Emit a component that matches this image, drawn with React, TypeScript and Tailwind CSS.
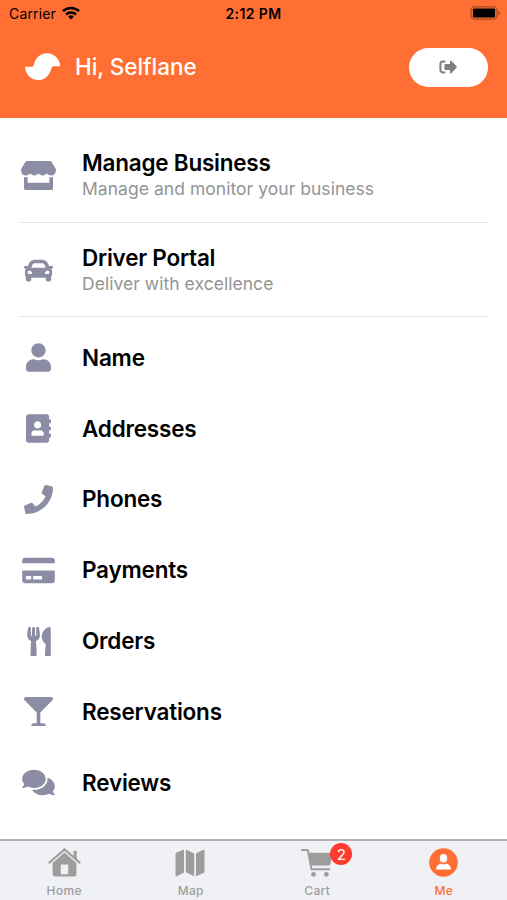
import type { ReactNode } from 'react'
import type { IconType } from 'react-icons'
import {
  FaAddressBook,
  FaCar,
  FaComments,
  FaCreditCard,
  FaGlassMartini,
  FaPhone,
  FaStore,
  FaUser,
  FaUtensils,
} from 'react-icons/fa'

const portals: { icon: IconType; iconClass: string; title: string; text: string }[] = [
  {
    icon: FaStore,
    iconClass: 'h-[29px] w-[35px]',
    title: 'Manage Business',
    text: 'Manage and monitor your business',
  },
  { icon: FaCar, iconClass: 'h-[29px] w-[29px]', title: 'Driver Portal', text: 'Deliver with excellence' },
]

const items: { icon: IconType; iconClass: string; label: string }[] = [
  { icon: FaUser, iconClass: 'h-[29px] w-[25px]', label: 'Name' },
  { icon: FaAddressBook, iconClass: 'h-[29px] w-[25px]', label: 'Addresses' },
  { icon: FaPhone, iconClass: 'h-[29px] w-[29px]', label: 'Phones' },
  { icon: FaCreditCard, iconClass: 'h-[29px] w-[33px]', label: 'Payments' },
  { icon: FaUtensils, iconClass: 'h-[29px] w-[24px]', label: 'Orders' },
  { icon: FaGlassMartini, iconClass: 'h-[29px] w-[29px]', label: 'Reservations' },
  { icon: FaComments, iconClass: 'h-[29px] w-[33px]', label: 'Reviews' },
]

function StatusBar() {
  return (
    <div className="grid h-[27px] grid-cols-3 items-center px-[9px] text-black">
      <div className="flex items-center gap-[6px]">
        <span className="text-[14px] leading-none tracking-[0.15px]">Carrier</span>
        <svg viewBox="0 0 18 14" className="-mt-px h-[14px] w-[18px]" fill="none" stroke="currentColor" strokeWidth="2.5">
          <path d="M1 5.2a11.4 11.4 0 0 1 16 0" />
          <path d="M4 8.5a7.2 7.2 0 0 1 10 0" />
          <path d="M9 13.6 6.2 10.7a4 4 0 0 1 5.6 0z" fill="currentColor" stroke="none" />
        </svg>
      </div>
      <span className="pt-px text-center text-[14px] leading-none font-semibold tracking-[0.4px] whitespace-nowrap">
        2:12 PM
      </span>
      <svg viewBox="0 0 31 14" className="-mt-px -mr-[3px] h-[14px] w-[31px] justify-self-end">
        <rect x="1" y="0.8" width="26" height="12.4" rx="3.6" fill="none" stroke="#a34a25" strokeWidth="1.2" />
        <rect x="2.9" y="2.6" width="22.2" height="8.8" rx="1.2" fill="#000" />
        <path d="M28.4 5v4c1.1-.4 1.7-1.1 1.7-2s-.6-1.6-1.7-2z" fill="#a34a25" />
      </svg>
    </div>
  )
}

function Header() {
  return (
    <header className="h-[118px] bg-[#ff6f33]">
      <StatusBar />
      <div className="flex h-20 items-center justify-between pr-[19px] pl-[25px]">
        <div className="flex items-center gap-[14px]">
          <svg viewBox="0 0 36 28" className="h-[28px] w-[36px]" fill="#fff">
            <path d="M0 13.800h6.500C8 13.800 8.600 12.800 9 11.200 10.600 4.600 15.700.3 21.800.3 29.200.3 35 6 35.300 13.300h-6.600c-1.500 0-2.100 1-2.500 2.600C24.600 22.500 19.500 27 13.400 27 6 27 .3 21.200 0 13.800z" />
          </svg>
          <h1 className="text-[22.5px] leading-none font-medium tracking-[-0.05px] text-white">Hi, Selflane</h1>
        </div>
        <button className="flex h-[39px] w-[79px] items-center justify-center rounded-full bg-white" aria-label="Log out">
          <svg viewBox="0 0 18 14" className="mr-[2px] h-[14px] w-[18px]" fill="#808080">
            <path d="M6.300 1.500H4a2.600 2.600 0 0 0-2.600 2.600v5.800A2.600 2.600 0 0 0 4 12.500h2.300" fill="none" stroke="#808080" strokeWidth="2" />
            <path d="M11 1.200c0-.8.8-1 1.300-.5l5.200 5.500c.5.500.5 1.100 0 1.600l-5.200 5.500c-.5.500-1.300.3-1.300-.5V10H6.200a.7.7 0 0 1-.7-.7V4.700c0-.4.3-.7.7-.7H11z" />
          </svg>
        </button>
      </div>
    </header>
  )
}

function RowIcon({ icon: Icon, className }: { icon: IconType; className: string }) {
  return (
    <span className="flex w-[37px] shrink-0 justify-center text-[#8c8da5]">
      <Icon className={className} />
    </span>
  )
}

function Tab({ label, active, children }: { label: string; active?: boolean; children: ReactNode }) {
  return (
    <a className={active ? 'flex flex-1 flex-col items-center text-[#ff6f33]' : 'flex flex-1 flex-col items-center text-[#9d9d9d]'}>
      <span className="relative flex h-[43px] items-center justify-center">{children}</span>
      <span className="text-[12px] leading-[14px] font-medium tracking-[0.35px]">{label}</span>
    </a>
  )
}

function TabBar() {
  return (
    <nav className="flex h-[61px] border-t-2 border-[#b0b1b4] bg-[#f0f1f5] pl-px">
      <Tab label="Home">
        <svg viewBox="0 0 34 31" className="h-[31px] w-[33px]" fill="currentColor">
          <path d="M1.500 15.500 17 2l15.500 13.500" fill="none" stroke="currentColor" strokeWidth="2.200" strokeLinecap="round" />
          <path d="M26.200 3.500h3.400v9.300l-3.400-2.800z" />
          <path fillRule="evenodd" d="M17 5.200 29.300 16v11.500a2.500 2.500 0 0 1-2.500 2.500H7.200a2.500 2.500 0 0 1-2.500-2.500V16zM13.200 17.500v10.200h7.600V17.500z" />
        </svg>
      </Tab>
      <Tab label="Map">
        <svg viewBox="0 0 30 28" className="mr-[2px] h-[28px] w-[30px]" fill="currentColor">
          <path d="M.5 5.200c0-.7.4-1.300 1-1.600L9 .5v23L1.800 27.300c-.7.300-1.300 0-1.300-.8z" />
          <path d="M10.800.5 19.200 4.500v22.700l-8.400-4z" />
          <path d="M21 4.500 28.200.8c.7-.3 1.300 0 1.300.8v20.800c0 .7-.4 1.300-1 1.600L21 27.300z" />
        </svg>
      </Tab>
      <Tab label="Cart">
        <svg viewBox="0 0 32 29" className="h-[29px] w-[32px]" fill="currentColor">
          <path d="M1 2h5.800l3.800 19.200h17.600" fill="none" stroke="currentColor" strokeWidth="2" strokeLinecap="round" strokeLinejoin="round" />
          <path d="M7.500 4.800h22.800c.8 0 1.200.5 1 1.300l-1.800 10c-.2.800-.7 1.200-1.500 1.300H9.800z" />
          <circle cx="12.500" cy="26.400" r="2.400" />
          <circle cx="25.300" cy="26.400" r="2.400" />
        </svg>
        <span className="absolute top-[2px] left-[29px] flex size-[22px] items-center justify-center rounded-full bg-[#ff3b30] text-[15px] leading-none text-white">
          2
        </span>
      </Tab>
      <Tab label="Me" active>
        <svg viewBox="0 0 29 29" className="size-[29px]">
          <circle cx="14.500" cy="14.500" r="14.300" fill="#ff6f33" />
          <ellipse cx="14.500" cy="10.200" rx="3.700" ry="4.200" fill="#fff" />
          <path d="M7 21.500c.4-4 3-5.700 5-5.700 1.600.8 3.400.8 5 0 2 0 4.600 1.700 5 5.700z" fill="#fff" />
        </svg>
      </Tab>
    </nav>
  )
}

export default function App() {
  return (
    <div className="flex h-[900px] w-[507px] flex-col overflow-hidden bg-white font-[Inter,sans-serif]">
      <Header />
      <main className="flex-1 pt-[10px] pr-[19px] pl-5">
        {portals.map(({ icon, iconClass, title, text }) => (
          <div key={title} className="flex h-[94.5px] items-center border-b border-[#e5e5e5] pt-[2px]">
            <RowIcon icon={icon} className={iconClass} />
            <div className="ml-[25px]">
              <h2 className="text-[22.5px] leading-[26px] font-semibold tracking-[-0.23px] text-black">{title}</h2>
              <p className="text-[17.5px] leading-[25px] tracking-[0.04px] text-[#949494]">{text}</p>
            </div>
          </div>
        ))}
        <ul className="pt-[5.5px]">
          {items.map(({ icon, iconClass, label }) => (
            <li key={label} className="flex h-[70.8px] items-center">
              <RowIcon icon={icon} className={iconClass} />
              <span className="-mt-px ml-[25px] text-[22.5px] leading-[27px] font-semibold tracking-[-0.2px] text-black">
                {label}
              </span>
            </li>
          ))}
        </ul>
      </main>
      <TabBar />
    </div>
  )
}
